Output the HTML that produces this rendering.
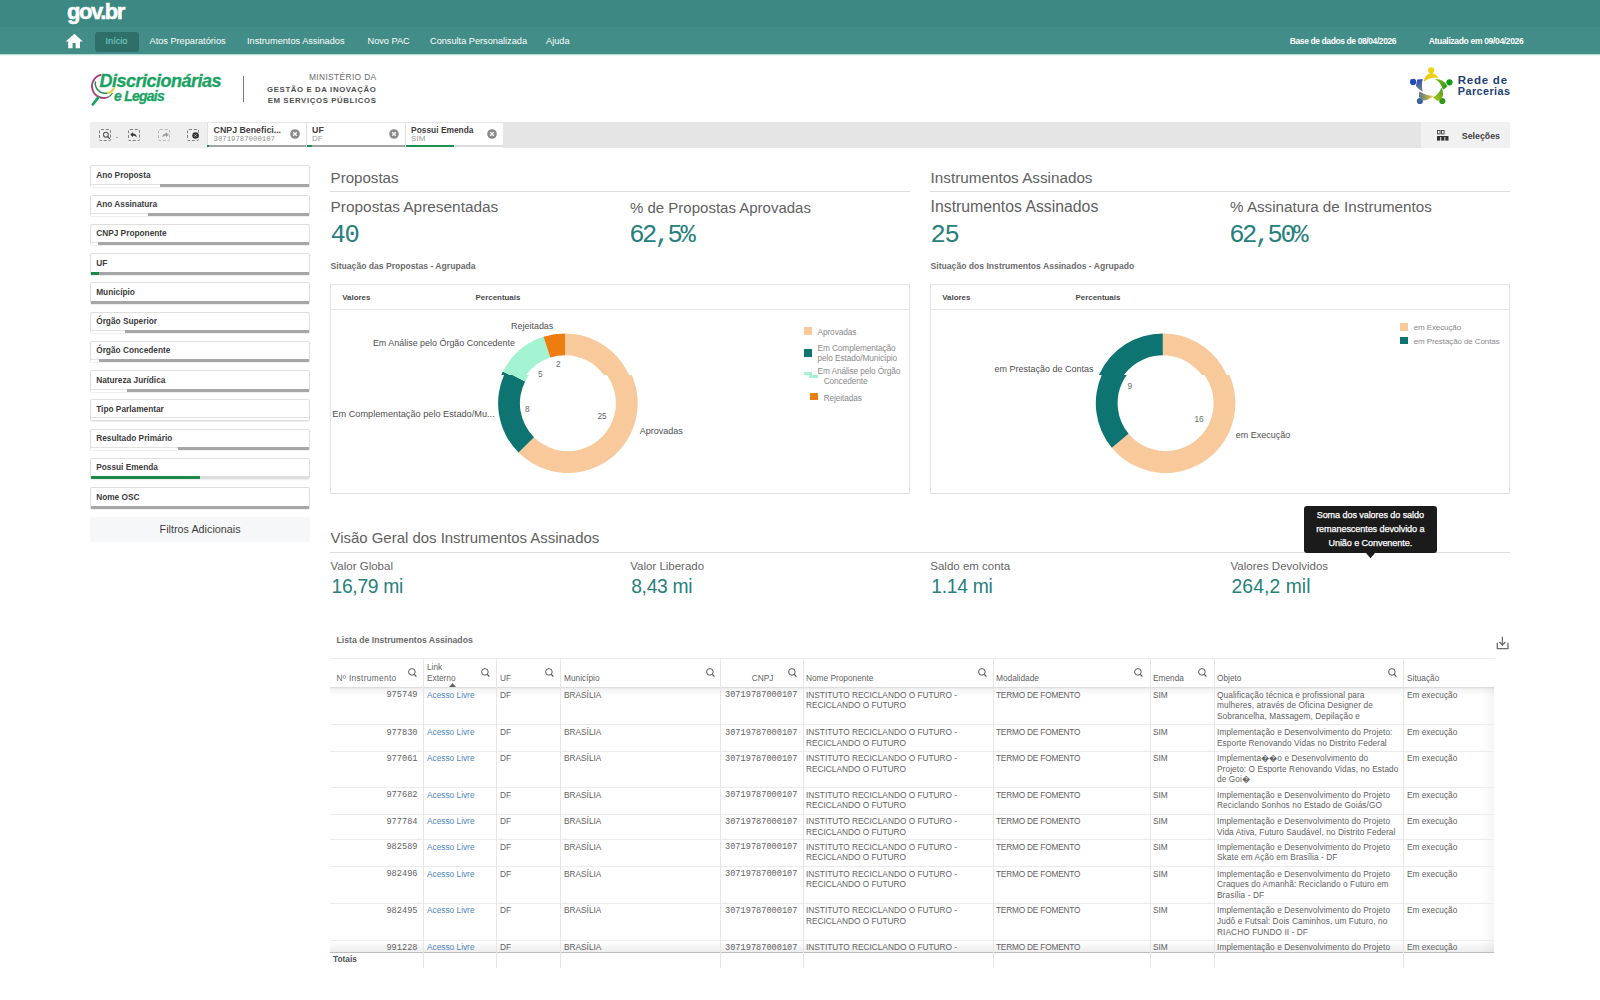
<!DOCTYPE html><html><head><meta charset="utf-8"><style>
html,body{margin:0;padding:0}
body{width:1600px;height:1000px;overflow:hidden;position:relative;background:#fff;font-family:'Liberation Sans',sans-serif}
.t{position:absolute;white-space:nowrap}
.r{position:absolute;box-sizing:border-box}
svg{position:absolute;overflow:visible}
</style></head><body>
<div class="r" style="left:0.00px;top:0.00px;width:1600.00px;height:27.00px;background:#3c8882;"></div>
<div class="r" style="left:0.00px;top:27.00px;width:1600.00px;height:27.00px;background:#428d87;"></div>
<div class="r" style="left:0.00px;top:54.00px;width:1600.00px;height:1.00px;background:#b4e0da;"></div>
<div class="r" style="left:0.00px;top:55.00px;width:1600.00px;height:1.00px;background:#eaf6f4;"></div>
<div class="t" style="left:67.00px;top:0.90px;font:bold 22px/22px 'Liberation Sans',sans-serif;color:#fff;letter-spacing:-1.45px;-webkit-text-stroke:0.5px #fff;">gov.br</div>
<svg style="left:65px;top:33px" width="19" height="16" viewBox="0 0 19 16"><path d="M9.5 0.8 L0.6 8.6 L3.2 8.6 L3.2 15.2 L7.6 15.2 L7.6 10 L10.6 10 L10.6 15.2 L15 15.2 L15 8.6 L17.8 8.6 Z" fill="#fff"/></svg>
<div class="r" style="left:95.00px;top:32.00px;width:44.00px;height:19.50px;background:#2f6f69;border-radius:3px;"></div>
<div class="t" style="left:105.50px;top:37.18px;font:normal 9.2px/9.2px 'Liberation Sans',sans-serif;color:#7ad8ce;">Início</div>
<div class="t" style="left:149.50px;top:37.18px;font:normal 9.2px/9.2px 'Liberation Sans',sans-serif;color:#fff;">Atos Preparatórios</div>
<div class="t" style="left:247.00px;top:37.18px;font:normal 9.2px/9.2px 'Liberation Sans',sans-serif;color:#fff;">Instrumentos Assinados</div>
<div class="t" style="left:367.50px;top:37.18px;font:normal 9.2px/9.2px 'Liberation Sans',sans-serif;color:#fff;">Novo PAC</div>
<div class="t" style="left:430.00px;top:37.18px;font:normal 9.2px/9.2px 'Liberation Sans',sans-serif;color:#fff;">Consulta Personalizada</div>
<div class="t" style="left:546.00px;top:37.18px;font:normal 9.2px/9.2px 'Liberation Sans',sans-serif;color:#fff;">Ajuda</div>
<div class="t" style="left:1289.80px;top:37.38px;font:bold 8.5px/8.5px 'Liberation Sans',sans-serif;color:#fff;letter-spacing:-0.4px;">Base de dados de 08/04/2026</div>
<div class="t" style="left:1428.80px;top:37.38px;font:bold 8.5px/8.5px 'Liberation Sans',sans-serif;color:#fff;letter-spacing:-0.33px;">Atualizado em 09/04/2026</div>
<svg style="left:86px;top:70px" width="32" height="38" viewBox="0 0 32 38">
<path d="M15.5 4.6 A11.8 11.8 0 1 0 22.5 27" fill="none" stroke="#a2457f" stroke-width="1.9"/>
<path d="M22.5 27 A11.8 11.8 0 0 0 26.5 23" fill="none" stroke="#2e8a5c" stroke-width="1.3"/>
<path d="M9.48 11.39 A10 10 0 0 0 21.04 23.15" fill="none" stroke="#2e8a5c" stroke-width="1.5"/>
<path d="M21.04 23.15 A10 10 0 0 0 28.13 17.99" fill="none" stroke="#d9d33e" stroke-width="2"/>
<path d="M6.8 34.5 L12.2 27.6" fill="none" stroke="#1aa362" stroke-width="2.8" stroke-linecap="round"/>
</svg>
<div class="t" style="left:99.50px;top:72.20px;font:bold 18px/18px 'Liberation Sans',sans-serif;color:#1aa362;letter-spacing:-0.5px;font-style:italic;-webkit-text-stroke:0.3px #1aa362;">Discricionárias</div>
<div class="t" style="left:114.00px;top:89.10px;font:bold 14px/14px 'Liberation Sans',sans-serif;color:#1aa362;letter-spacing:-0.75px;font-style:italic;-webkit-text-stroke:0.3px #1aa362;">e Legais</div>
<div class="r" style="left:243.00px;top:76.00px;width:1.20px;height:26.00px;background:#7a7a7a;"></div>
<div class="t" style="left:-223.50px;width:600px;text-align:right;top:73.36px;font:normal 8.4px/8.4px 'Liberation Sans',sans-serif;color:#6a6a6a;letter-spacing:0.36px;padding-right:0;">MINISTÉRIO DA</div>
<div class="t" style="left:-223.50px;width:600px;text-align:right;top:85.57px;font:bold 7.8px/7.8px 'Liberation Sans',sans-serif;color:#4f4f4f;letter-spacing:0.62px;">GESTÃO E DA INOVAÇÃO</div>
<div class="t" style="left:-223.50px;width:600px;text-align:right;top:97.07px;font:bold 7.8px/7.8px 'Liberation Sans',sans-serif;color:#4f4f4f;letter-spacing:0.62px;">EM SERVIÇOS PÚBLICOS</div>
<svg style="left:1406px;top:64px" width="50" height="42" viewBox="0 0 50 42">
<defs>
<linearGradient id="rg1" x1="0" y1="0" x2="1" y2="0"><stop offset="0" stop-color="#e9c52a"/><stop offset="1" stop-color="#f3d60c"/></linearGradient>
<linearGradient id="rg2" x1="0" y1="0" x2="1" y2="1"><stop offset="0" stop-color="#8ab81c"/><stop offset="1" stop-color="#1f961a"/></linearGradient>
<linearGradient id="rg3" x1="0" y1="1" x2="1" y2="0"><stop offset="0" stop-color="#b9c91a"/><stop offset="1" stop-color="#3f9e19"/></linearGradient>
<linearGradient id="rg4" x1="1" y1="0" x2="0" y2="0"><stop offset="0" stop-color="#efc91c"/><stop offset="1" stop-color="#5a7493"/></linearGradient>
<linearGradient id="rg5" x1="0" y1="0" x2="0.3" y2="1"><stop offset="0" stop-color="#2346b4"/><stop offset="1" stop-color="#6a8090"/></linearGradient>
</defs>
<circle cx="25.2" cy="6.3" r="3.1" fill="#f2d10e"/>
<circle cx="7.1" cy="17.9" r="3.1" fill="#1f48bf"/>
<circle cx="43.5" cy="18.3" r="3.1" fill="#139a16"/>
<circle cx="13.9" cy="37" r="3.1" fill="#3e64a0"/>
<circle cx="36.3" cy="37" r="3.1" fill="#2f9a1a"/>
<path d="M17.5 18 Q19 10.2 25 9 Q30 9.2 32.5 14.2 Q25 12.5 17.5 18 Z" fill="url(#rg1)"/>
<path d="M29 15 Q37 14.5 41.5 22 Q40 24 37 25.8 Q35 18.5 29 15 Z" fill="url(#rg2)"/>
<path d="M35.5 23.5 Q38 30 36.5 33 Q34 36.5 32 37 Q29 35.5 27 33.5 Q33 30 35.5 23.5 Z" fill="url(#rg3)"/>
<path d="M27.5 32 Q22 36 18 36.5 Q14.5 35 13 33 Q12.8 30 13.5 27.5 Q20 31.5 27.5 32 Z" fill="url(#rg4)"/>
<path d="M16.8 27.7 Q12 25 10 22 Q10.5 17 11.5 15.5 Q14 15 16.8 15 Q15 21 16.8 27.7 Z" fill="url(#rg5)"/>
</svg>
<div class="t" style="left:1457.80px;top:74.92px;font:bold 11.5px/11.5px 'Liberation Sans',sans-serif;color:#1d4079;letter-spacing:0.75px;">Rede de</div>
<div class="t" style="left:1457.80px;top:85.72px;font:bold 10.8px/10.8px 'Liberation Sans',sans-serif;color:#1d4079;letter-spacing:0.45px;">Parcerias</div>
<div class="r" style="left:90.00px;top:122.30px;width:1331.00px;height:25.40px;background:#e5e5e5;"></div>
<div class="r" style="left:90.00px;top:122.30px;width:117.00px;height:25.40px;background:#efefef;"></div>
<div class="r" style="left:1421.00px;top:122.30px;width:88.50px;height:25.40px;background:#f1f1f1;"></div>
<div class="r" style="left:99px;top:128.8px;width:12px;height:12px;border:1px dashed #808080;border-radius:2px;opacity:1"></div>
<div class="r" style="left:128px;top:128.8px;width:12px;height:12px;border:1px dashed #808080;border-radius:2px;opacity:1"></div>
<div class="r" style="left:157.5px;top:128.8px;width:12px;height:12px;border:1px dashed #808080;border-radius:2px;opacity:0.5"></div>
<div class="r" style="left:187px;top:128.8px;width:12px;height:12px;border:1px dashed #808080;border-radius:2px;opacity:1"></div>
<svg style="left:102px;top:131px" width="9" height="9" viewBox="0 0 9 9"><circle cx="3.9" cy="3.7" r="2.4" fill="none" stroke="#555" stroke-width="1.1"/><path d="M5.6 5.5 L7.8 7.9" stroke="#555" stroke-width="1.3"/></svg>
<div class="r" style="left:116px;top:136.6px;width:1.5px;height:1px;background:#aaa"></div>
<svg style="left:128.5px;top:131px" width="9" height="8" viewBox="0 0 9 8"><path d="M1.2 3.6 L4 1.2 L4 2.6 C6.2 2.6 7.6 4 7.8 6.6 C6.8 5.2 5.8 4.8 4 4.8 L4 6.2 Z" fill="#3a3a3a"/></svg>
<svg style="left:160.5px;top:131px;opacity:.45" width="9" height="8" viewBox="0 0 9 8"><path d="M7.8 3.6 L5 1.2 L5 2.6 C2.8 2.6 1.4 4 1.2 6.6 C2.2 5.2 3.2 4.8 5 4.8 L5 6.2 Z" fill="#3a3a3a"/></svg>
<svg style="left:192px;top:132px" width="7" height="7" viewBox="0 0 7 7"><circle cx="3.5" cy="3.5" r="3.2" fill="#2e2e2e"/><path d="M2.3 2.3 L4.7 4.7 M4.7 2.3 L2.3 4.7" stroke="#ddd" stroke-width="0.7"/></svg>
<div class="r" style="left:207.00px;top:123.00px;width:99.00px;height:24.50px;background:#fff;"></div>
<div class="t" style="left:213.60px;top:126.12px;font:bold 8.8px/8.8px 'Liberation Sans',sans-serif;color:#404040;">CNPJ Benefici...</div>
<div class="t" style="left:213.60px;top:135.53px;font:normal 7.3px/7.3px 'Liberation Mono',monospace;color:#8f8f8f;">30719787000107</div>
<svg style="left:290.0px;top:128.8px" width="10" height="10" viewBox="0 0 10 10"><circle cx="5" cy="5" r="4.8" fill="#8a8a8a"/><path d="M3.2 3.2 L6.8 6.8 M6.8 3.2 L3.2 6.8" stroke="#fff" stroke-width="1.3"/></svg>
<div class="r" style="left:306.50px;top:123.00px;width:98.50px;height:24.50px;background:#fff;"></div>
<div class="t" style="left:312.10px;top:126.12px;font:bold 8.8px/8.8px 'Liberation Sans',sans-serif;color:#404040;">UF</div>
<div class="t" style="left:312.10px;top:134.60px;font:normal 8px/8px 'Liberation Sans',sans-serif;color:#9a9a9a;">DF</div>
<svg style="left:389.0px;top:128.8px" width="10" height="10" viewBox="0 0 10 10"><circle cx="5" cy="5" r="4.8" fill="#8a8a8a"/><path d="M3.2 3.2 L6.8 6.8 M6.8 3.2 L3.2 6.8" stroke="#fff" stroke-width="1.3"/></svg>
<div class="r" style="left:405.50px;top:123.00px;width:97.00px;height:24.50px;background:#fff;"></div>
<div class="t" style="left:411.10px;top:126.46px;font:bold 8.4px/8.4px 'Liberation Sans',sans-serif;color:#404040;">Possui Emenda</div>
<div class="t" style="left:411.10px;top:134.60px;font:normal 8px/8px 'Liberation Sans',sans-serif;color:#9a9a9a;">SIM</div>
<svg style="left:486.5px;top:128.8px" width="10" height="10" viewBox="0 0 10 10"><circle cx="5" cy="5" r="4.8" fill="#8a8a8a"/><path d="M3.2 3.2 L6.8 6.8 M6.8 3.2 L3.2 6.8" stroke="#fff" stroke-width="1.3"/></svg>
<div class="r" style="left:207.00px;top:123.00px;width:1.00px;height:24.50px;background:#e0e0e0;"></div>
<div class="r" style="left:306.00px;top:123.00px;width:1.00px;height:24.50px;background:#e0e0e0;"></div>
<div class="r" style="left:405.00px;top:123.00px;width:1.00px;height:24.50px;background:#e0e0e0;"></div>
<div class="r" style="left:207.00px;top:144.60px;width:99.00px;height:2.90px;background:#a3a3a3;"></div>
<div class="r" style="left:207.00px;top:144.60px;width:1.50px;height:2.90px;background:#1e8f4e;"></div>
<div class="r" style="left:306.50px;top:144.60px;width:98.50px;height:2.90px;background:#a3a3a3;"></div>
<div class="r" style="left:306.50px;top:144.60px;width:5.00px;height:2.90px;background:#1e8f4e;"></div>
<div class="r" style="left:405.50px;top:144.60px;width:97.00px;height:2.90px;background:#dcdcdc;"></div>
<div class="r" style="left:405.50px;top:144.60px;width:48.50px;height:2.90px;background:#1e8f4e;"></div>
<svg style="left:1437px;top:130px" width="12" height="11" viewBox="0 0 12 11"><rect x="0.5" y="0.5" width="2.6" height="3.4" fill="none" stroke="#444" stroke-width="0.9"/><rect x="4.5" y="0.5" width="2.6" height="3.4" fill="none" stroke="#444" stroke-width="0.9"/><rect x="0" y="6" width="11.5" height="1" fill="#333"/><rect x="0" y="7" width="3.2" height="3.6" fill="#333"/><rect x="4.2" y="7" width="3.2" height="3.6" fill="#333"/><rect x="8.3" y="7" width="3.2" height="3.6" fill="#333"/></svg>
<div class="t" style="left:1461.80px;top:131.52px;font:bold 8.8px/8.8px 'Liberation Sans',sans-serif;color:#404040;">Seleções</div>
<div class="r" style="left:90.00px;top:165.40px;width:219.50px;height:21.60px;background:#fff;border:1px solid #dedede;border-radius:2px;box-shadow:0 1px 1px rgba(0,0,0,.07);"></div>
<div class="r" style="left:90.50px;top:183.80px;width:218.50px;height:3.00px;background:#a6a6a6;"></div>
<div class="r" style="left:90.50px;top:183.80px;width:69.50px;height:3.00px;background:#fff;border-top:1px solid #e2e2e2;"></div>
<div class="t" style="left:96.20px;top:170.94px;font:bold 8.3px/8.3px 'Liberation Sans',sans-serif;color:#3c3c3c;">Ano Proposta</div>
<div class="r" style="left:90.00px;top:194.65px;width:219.50px;height:21.60px;background:#fff;border:1px solid #dedede;border-radius:2px;box-shadow:0 1px 1px rgba(0,0,0,.07);"></div>
<div class="r" style="left:90.50px;top:213.05px;width:218.50px;height:3.00px;background:#a6a6a6;"></div>
<div class="r" style="left:90.50px;top:213.05px;width:57.50px;height:3.00px;background:#fff;border-top:1px solid #e2e2e2;"></div>
<div class="t" style="left:96.20px;top:200.19px;font:bold 8.3px/8.3px 'Liberation Sans',sans-serif;color:#3c3c3c;">Ano Assinatura</div>
<div class="r" style="left:90.00px;top:223.90px;width:219.50px;height:21.60px;background:#fff;border:1px solid #dedede;border-radius:2px;box-shadow:0 1px 1px rgba(0,0,0,.07);"></div>
<div class="r" style="left:90.50px;top:242.30px;width:218.50px;height:3.00px;background:#a6a6a6;"></div>
<div class="r" style="left:90.50px;top:242.30px;width:7.10px;height:3.00px;background:#fff;border-top:1px solid #e2e2e2;"></div>
<div class="t" style="left:96.20px;top:229.44px;font:bold 8.3px/8.3px 'Liberation Sans',sans-serif;color:#3c3c3c;">CNPJ Proponente</div>
<div class="r" style="left:90.00px;top:253.15px;width:219.50px;height:21.60px;background:#fff;border:1px solid #dedede;border-radius:2px;box-shadow:0 1px 1px rgba(0,0,0,.07);"></div>
<div class="r" style="left:90.50px;top:271.55px;width:218.50px;height:3.00px;background:#a6a6a6;"></div>
<div class="r" style="left:90.50px;top:271.55px;width:8.50px;height:3.00px;background:#1a8b47;"></div>
<div class="t" style="left:96.20px;top:258.69px;font:bold 8.3px/8.3px 'Liberation Sans',sans-serif;color:#3c3c3c;">UF</div>
<div class="r" style="left:90.00px;top:282.40px;width:219.50px;height:21.60px;background:#fff;border:1px solid #dedede;border-radius:2px;box-shadow:0 1px 1px rgba(0,0,0,.07);"></div>
<div class="r" style="left:90.50px;top:300.80px;width:218.50px;height:3.00px;background:#a6a6a6;"></div>
<div class="t" style="left:96.20px;top:287.94px;font:bold 8.3px/8.3px 'Liberation Sans',sans-serif;color:#3c3c3c;">Município</div>
<div class="r" style="left:90.00px;top:311.65px;width:219.50px;height:21.60px;background:#fff;border:1px solid #dedede;border-radius:2px;box-shadow:0 1px 1px rgba(0,0,0,.07);"></div>
<div class="r" style="left:90.50px;top:330.05px;width:218.50px;height:3.00px;background:#a6a6a6;"></div>
<div class="r" style="left:90.50px;top:330.05px;width:34.50px;height:3.00px;background:#fff;border-top:1px solid #e2e2e2;"></div>
<div class="t" style="left:96.20px;top:317.19px;font:bold 8.3px/8.3px 'Liberation Sans',sans-serif;color:#3c3c3c;">Órgão Superior</div>
<div class="r" style="left:90.00px;top:340.90px;width:219.50px;height:21.60px;background:#fff;border:1px solid #dedede;border-radius:2px;box-shadow:0 1px 1px rgba(0,0,0,.07);"></div>
<div class="r" style="left:90.50px;top:359.30px;width:218.50px;height:3.00px;background:#a6a6a6;"></div>
<div class="r" style="left:90.50px;top:359.30px;width:8.20px;height:3.00px;background:#fff;border-top:1px solid #e2e2e2;"></div>
<div class="t" style="left:96.20px;top:346.44px;font:bold 8.3px/8.3px 'Liberation Sans',sans-serif;color:#3c3c3c;">Órgão Concedente</div>
<div class="r" style="left:90.00px;top:370.15px;width:219.50px;height:21.60px;background:#fff;border:1px solid #dedede;border-radius:2px;box-shadow:0 1px 1px rgba(0,0,0,.07);"></div>
<div class="r" style="left:90.50px;top:388.55px;width:218.50px;height:3.00px;background:#a6a6a6;"></div>
<div class="r" style="left:90.50px;top:388.55px;width:36.50px;height:3.00px;background:#fff;border-top:1px solid #e2e2e2;"></div>
<div class="t" style="left:96.20px;top:375.69px;font:bold 8.3px/8.3px 'Liberation Sans',sans-serif;color:#3c3c3c;">Natureza Jurídica</div>
<div class="r" style="left:90.00px;top:399.40px;width:219.50px;height:21.60px;background:#fff;border:1px solid #dedede;border-radius:2px;box-shadow:0 1px 1px rgba(0,0,0,.07);"></div>
<div class="r" style="left:90.50px;top:417.40px;width:218.50px;height:1.00px;background:#e2e2e2;"></div>
<div class="t" style="left:96.20px;top:404.94px;font:bold 8.3px/8.3px 'Liberation Sans',sans-serif;color:#3c3c3c;">Tipo Parlamentar</div>
<div class="r" style="left:90.00px;top:428.65px;width:219.50px;height:21.60px;background:#fff;border:1px solid #dedede;border-radius:2px;box-shadow:0 1px 1px rgba(0,0,0,.07);"></div>
<div class="r" style="left:90.50px;top:447.05px;width:218.50px;height:3.00px;background:#a6a6a6;"></div>
<div class="r" style="left:90.50px;top:447.05px;width:87.50px;height:3.00px;background:#fff;border-top:1px solid #e2e2e2;"></div>
<div class="t" style="left:96.20px;top:434.19px;font:bold 8.3px/8.3px 'Liberation Sans',sans-serif;color:#3c3c3c;">Resultado Primário</div>
<div class="r" style="left:90.00px;top:457.90px;width:219.50px;height:21.60px;background:#fff;border:1px solid #dedede;border-radius:2px;box-shadow:0 1px 1px rgba(0,0,0,.07);"></div>
<div class="r" style="left:90.50px;top:476.30px;width:218.50px;height:3.00px;background:#dedede;"></div>
<div class="r" style="left:90.50px;top:476.30px;width:109.50px;height:3.00px;background:#1a8b47;"></div>
<div class="t" style="left:96.20px;top:463.44px;font:bold 8.3px/8.3px 'Liberation Sans',sans-serif;color:#3c3c3c;">Possui Emenda</div>
<div class="r" style="left:90.00px;top:487.15px;width:219.50px;height:21.60px;background:#fff;border:1px solid #dedede;border-radius:2px;box-shadow:0 1px 1px rgba(0,0,0,.07);"></div>
<div class="r" style="left:90.50px;top:505.55px;width:218.50px;height:3.00px;background:#a6a6a6;"></div>
<div class="t" style="left:96.20px;top:492.69px;font:bold 8.3px/8.3px 'Liberation Sans',sans-serif;color:#3c3c3c;">Nome OSC</div>
<div class="r" style="left:90.00px;top:517.00px;width:219.50px;height:25.30px;background:#f6f7f8;border-radius:2px;"></div>
<div class="t" style="left:-99.90px;width:600px;text-align:center;top:524.42px;font:normal 10.8px/10.8px 'Liberation Sans',sans-serif;color:#3f3f3f;">Filtros Adicionais</div>
<div class="t" style="left:330.60px;top:169.91px;font:normal 15.1px/15.1px 'Liberation Sans',sans-serif;color:#616161;">Propostas</div>
<div class="r" style="left:330.00px;top:191.00px;width:580.00px;height:1.00px;background:#dcdcdc;"></div>
<div class="t" style="left:330.60px;top:199.21px;font:normal 15.4px/15.4px 'Liberation Sans',sans-serif;color:#616161;">Propostas Apresentadas</div>
<div class="t" style="left:630.00px;top:199.55px;font:normal 15.0px/15.0px 'Liberation Sans',sans-serif;color:#616161;">% de Propostas Aprovadas</div>
<div class="t" style="left:330.60px;top:222.88px;font:normal 25.5px/25.5px 'Liberation Mono',monospace;color:#27807b;letter-spacing:-1.3px;">40</div>
<div class="t" style="left:629.20px;top:222.88px;font:normal 25.5px/25.5px 'Liberation Mono',monospace;color:#27807b;letter-spacing:-2.5px;">62,5%</div>
<div class="t" style="left:330.60px;top:262.09px;font:bold 8.6px/8.6px 'Liberation Sans',sans-serif;color:#6b6b6b;">Situação das Propostas - Agrupada</div>
<div class="r" style="left:330.00px;top:284.00px;width:580.00px;height:210.00px;border:1px solid #e3e3e3;background:#fff;"></div>
<div class="r" style="left:331.00px;top:309.00px;width:578.00px;height:1.00px;background:#e6e6e6;"></div>
<div class="t" style="left:342.30px;top:293.59px;font:bold 7.9px/7.9px 'Liberation Sans',sans-serif;color:#4a4a4a;">Valores</div>
<div class="t" style="left:475.60px;top:293.59px;font:bold 7.9px/7.9px 'Liberation Sans',sans-serif;color:#4a4a4a;">Percentuais</div>
<div class="t" style="left:930.60px;top:169.79px;font:normal 15.25px/15.25px 'Liberation Sans',sans-serif;color:#616161;">Instrumentos Assinados</div>
<div class="r" style="left:930.00px;top:191.00px;width:580.00px;height:1.00px;background:#dcdcdc;"></div>
<div class="t" style="left:930.60px;top:198.87px;font:normal 15.8px/15.8px 'Liberation Sans',sans-serif;color:#616161;">Instrumentos Assinados</div>
<div class="t" style="left:1230.00px;top:199.38px;font:normal 15.2px/15.2px 'Liberation Sans',sans-serif;color:#616161;">% Assinatura de Instrumentos</div>
<div class="t" style="left:930.60px;top:222.88px;font:normal 25.5px/25.5px 'Liberation Mono',monospace;color:#27807b;letter-spacing:-1.3px;">25</div>
<div class="t" style="left:1229.20px;top:222.88px;font:normal 25.5px/25.5px 'Liberation Mono',monospace;color:#27807b;letter-spacing:-2.5px;">62,50%</div>
<div class="t" style="left:930.60px;top:262.09px;font:bold 8.6px/8.6px 'Liberation Sans',sans-serif;color:#6b6b6b;">Situação dos Instrumentos Assinados - Agrupado</div>
<div class="r" style="left:930.00px;top:284.00px;width:580.00px;height:210.00px;border:1px solid #e3e3e3;background:#fff;"></div>
<div class="r" style="left:931.00px;top:309.00px;width:578.00px;height:1.00px;background:#e6e6e6;"></div>
<div class="t" style="left:942.30px;top:293.59px;font:bold 7.9px/7.9px 'Liberation Sans',sans-serif;color:#4a4a4a;">Valores</div>
<div class="t" style="left:1075.60px;top:293.59px;font:bold 7.9px/7.9px 'Liberation Sans',sans-serif;color:#4a4a4a;">Percentuais</div>
<svg style="left:0;top:0" width="1600" height="1000" viewBox="0 0 1600 1000"><defs><clipPath id="ct1"><rect x="0" y="0" width="1600" height="375"/></clipPath><clipPath id="cb1"><rect x="0" y="375" width="1600" height="625"/></clipPath></defs><g clip-path="url(#ct1)"><g transform="translate(-2.8,0)"><path d="M567.90 333.40 A69.8 69.8 0 1 1 518.54 452.56 L533.96 437.14 A48.0 48.0 0 1 0 567.90 355.20 Z" fill="#f7c99b"/><path d="M518.54 452.56 A69.8 69.8 0 0 1 505.71 371.51 L525.13 381.41 A48.0 48.0 0 0 0 533.96 437.14 Z" fill="#0d7471"/><path d="M505.71 371.51 A69.8 69.8 0 0 1 546.33 336.82 L553.07 357.55 A48.0 48.0 0 0 0 525.13 381.41 Z" fill="#a3f3d3"/><path d="M546.33 336.82 A69.8 69.8 0 0 1 567.90 333.40 L567.90 355.20 A48.0 48.0 0 0 0 553.07 357.55 Z" fill="#ee7d11"/></g></g><g clip-path="url(#cb1)"><path d="M567.90 333.40 A69.8 69.8 0 1 1 518.54 452.56 L533.96 437.14 A48.0 48.0 0 1 0 567.90 355.20 Z" fill="#f7c99b"/><path d="M518.54 452.56 A69.8 69.8 0 0 1 505.71 371.51 L525.13 381.41 A48.0 48.0 0 0 0 533.96 437.14 Z" fill="#0d7471"/><path d="M505.71 371.51 A69.8 69.8 0 0 1 546.33 336.82 L553.07 357.55 A48.0 48.0 0 0 0 525.13 381.41 Z" fill="#a3f3d3"/><path d="M546.33 336.82 A69.8 69.8 0 0 1 567.90 333.40 L567.90 355.20 A48.0 48.0 0 0 0 553.07 357.55 Z" fill="#ee7d11"/></g></svg>
<div class="t" style="left:556.00px;top:359.94px;font:normal 8.3px/8.3px 'Liberation Sans',sans-serif;color:#6a6a6a;">2</div>
<div class="t" style="left:538.00px;top:369.94px;font:normal 8.3px/8.3px 'Liberation Sans',sans-serif;color:#6a6a6a;">5</div>
<div class="t" style="left:525.00px;top:404.94px;font:normal 8.3px/8.3px 'Liberation Sans',sans-serif;color:#6a6a6a;">8</div>
<div class="t" style="left:597.50px;top:412.44px;font:normal 8.3px/8.3px 'Liberation Sans',sans-serif;color:#6a6a6a;">25</div>
<div class="t" style="left:-46.70px;width:600px;text-align:right;top:321.59px;font:normal 8.95px/8.95px 'Liberation Sans',sans-serif;color:#4f4f4f;">Rejeitadas</div>
<div class="t" style="left:-85.00px;width:600px;text-align:right;top:339.39px;font:normal 8.95px/8.95px 'Liberation Sans',sans-serif;color:#4f4f4f;">Em Análise pelo Órgão Concedente</div>
<div class="t" style="left:332.30px;top:409.78px;font:normal 9.2px/9.2px 'Liberation Sans',sans-serif;color:#4f4f4f;">Em Complementação pelo Estado/Mu...</div>
<div class="t" style="left:639.80px;top:427.35px;font:normal 9px/9px 'Liberation Sans',sans-serif;color:#4f4f4f;">Aprovadas</div>
<div class="r" style="left:804.00px;top:327.30px;width:8.00px;height:7.80px;background:#f7c99b;"></div>
<div class="t" style="left:817.50px;top:327.55px;font:normal 8.3px/8.3px 'Liberation Sans',sans-serif;color:#8a8a8a;letter-spacing:-0.1px;">Aprovadas</div>
<div class="r" style="left:804.00px;top:349.20px;width:8.00px;height:7.60px;background:#0d7471;"></div>
<div class="t" style="left:817.50px;top:344.05px;font:normal 8.3px/8.3px 'Liberation Sans',sans-serif;color:#8a8a8a;letter-spacing:-0.1px;">Em Complementação</div>
<div class="t" style="left:817.50px;top:354.05px;font:normal 8.3px/8.3px 'Liberation Sans',sans-serif;color:#8a8a8a;letter-spacing:-0.1px;">pelo Estado/Município</div>
<div class="r" style="left:804.00px;top:372.00px;width:8.00px;height:3.00px;background:#a3f3d3;"></div>
<div class="r" style="left:809.00px;top:375.00px;width:9.00px;height:3.00px;background:#a3f3d3;"></div>
<div class="t" style="left:817.50px;top:366.55px;font:normal 8.3px/8.3px 'Liberation Sans',sans-serif;color:#8a8a8a;letter-spacing:-0.1px;">Em Análise pelo Órgão</div>
<div class="t" style="left:823.70px;top:376.55px;font:normal 8.3px/8.3px 'Liberation Sans',sans-serif;color:#8a8a8a;letter-spacing:-0.1px;">Concedente</div>
<div class="r" style="left:810.00px;top:392.90px;width:8.00px;height:7.60px;background:#ee7d11;"></div>
<div class="t" style="left:823.70px;top:393.55px;font:normal 8.3px/8.3px 'Liberation Sans',sans-serif;color:#8a8a8a;letter-spacing:-0.1px;">Rejeitadas</div>
<svg style="left:0;top:0" width="1600" height="1000" viewBox="0 0 1600 1000"><defs><clipPath id="ct2"><rect x="0" y="0" width="1600" height="375"/></clipPath><clipPath id="cb2"><rect x="0" y="375" width="1600" height="625"/></clipPath></defs><g clip-path="url(#ct2)"><g transform="translate(-2.8,0)"><path d="M1165.60 333.40 A69.8 69.8 0 1 1 1111.82 447.69 L1128.62 433.80 A48.0 48.0 0 1 0 1165.60 355.20 Z" fill="#f7c99b"/><path d="M1111.82 447.69 A69.8 69.8 0 0 1 1165.60 333.40 L1165.60 355.20 A48.0 48.0 0 0 0 1128.62 433.80 Z" fill="#0d7471"/></g></g><g clip-path="url(#cb2)"><path d="M1165.60 333.40 A69.8 69.8 0 1 1 1111.82 447.69 L1128.62 433.80 A48.0 48.0 0 1 0 1165.60 355.20 Z" fill="#f7c99b"/><path d="M1111.82 447.69 A69.8 69.8 0 0 1 1165.60 333.40 L1165.60 355.20 A48.0 48.0 0 0 0 1128.62 433.80 Z" fill="#0d7471"/></g></svg>
<div class="t" style="left:1127.50px;top:381.94px;font:normal 8.3px/8.3px 'Liberation Sans',sans-serif;color:#6a6a6a;">9</div>
<div class="t" style="left:1194.50px;top:414.94px;font:normal 8.3px/8.3px 'Liberation Sans',sans-serif;color:#6a6a6a;">16</div>
<div class="t" style="left:493.50px;width:600px;text-align:right;top:364.85px;font:normal 9px/9px 'Liberation Sans',sans-serif;color:#4f4f4f;">em Prestação de Contas</div>
<div class="t" style="left:1235.80px;top:430.85px;font:normal 9px/9px 'Liberation Sans',sans-serif;color:#4f4f4f;">em Execução</div>
<div class="r" style="left:1400.10px;top:323.10px;width:7.70px;height:7.70px;background:#f7c99b;"></div>
<div class="t" style="left:1413.70px;top:323.80px;font:normal 8.0px/8.0px 'Liberation Sans',sans-serif;color:#8a8a8a;letter-spacing:-0.1px;">em Execução</div>
<div class="r" style="left:1400.10px;top:336.70px;width:7.70px;height:7.30px;background:#0d7471;"></div>
<div class="t" style="left:1413.70px;top:337.50px;font:normal 8.0px/8.0px 'Liberation Sans',sans-serif;color:#8a8a8a;letter-spacing:-0.1px;">em Prestação de Contas</div>
<div class="t" style="left:330.50px;top:531.19px;font:normal 14.95px/14.95px 'Liberation Sans',sans-serif;color:#616161;">Visão Geral dos Instrumentos Assinados</div>
<div class="r" style="left:330.00px;top:552.00px;width:1180.00px;height:1.00px;background:#dcdcdc;"></div>
<div class="t" style="left:330.50px;top:560.83px;font:normal 11.5px/11.5px 'Liberation Sans',sans-serif;color:#666;">Valor Global</div>
<div class="t" style="left:331.50px;top:576.50px;font:normal 19.3px/19.3px 'Liberation Sans',sans-serif;color:#27807b;letter-spacing:-0.3px;">16,79 mi</div>
<div class="t" style="left:630.20px;top:560.83px;font:normal 11.5px/11.5px 'Liberation Sans',sans-serif;color:#666;">Valor Liberado</div>
<div class="t" style="left:631.20px;top:576.50px;font:normal 19.3px/19.3px 'Liberation Sans',sans-serif;color:#27807b;letter-spacing:-0.3px;">8,43 mi</div>
<div class="t" style="left:930.30px;top:560.83px;font:normal 11.5px/11.5px 'Liberation Sans',sans-serif;color:#666;">Saldo em conta</div>
<div class="t" style="left:931.30px;top:576.50px;font:normal 19.3px/19.3px 'Liberation Sans',sans-serif;color:#27807b;letter-spacing:-0.3px;">1.14 mi</div>
<div class="t" style="left:1230.50px;top:560.83px;font:normal 11.5px/11.5px 'Liberation Sans',sans-serif;color:#666;">Valores Devolvidos</div>
<div class="t" style="left:1231.50px;top:576.50px;font:normal 19.3px/19.3px 'Liberation Sans',sans-serif;color:#27807b;letter-spacing:0.1px;">264,2 mil</div>
<div class="r" style="left:1303.50px;top:506.20px;width:133.50px;height:46.80px;background:#1b1b1b;border-radius:3px;"></div>
<svg style="left:1365.5px;top:552.5px" width="9" height="6" viewBox="0 0 9 6"><path d="M0 0 L9 0 L4.5 5.2 Z" fill="#1b1b1b"/></svg>
<div class="t" style="left:1070.30px;width:600px;text-align:center;top:510.87px;font:normal 9.1px/9.1px 'Liberation Sans',sans-serif;color:#fff;letter-spacing:-0.1px;-webkit-text-stroke:0.25px #fff;">Soma dos valores do saldo</div>
<div class="t" style="left:1070.30px;width:600px;text-align:center;top:524.87px;font:normal 9.1px/9.1px 'Liberation Sans',sans-serif;color:#fff;letter-spacing:-0.1px;-webkit-text-stroke:0.25px #fff;">remanescentes devolvido a</div>
<div class="t" style="left:1070.30px;width:600px;text-align:center;top:538.87px;font:normal 9.1px/9.1px 'Liberation Sans',sans-serif;color:#fff;letter-spacing:-0.1px;-webkit-text-stroke:0.25px #fff;">União e Convenente.</div>
<div class="t" style="left:336.50px;top:635.61px;font:bold 8.7px/8.7px 'Liberation Sans',sans-serif;color:#6b6b6b;">Lista de Instrumentos Assinados</div>
<svg style="left:1495.5px;top:635.5px" width="14" height="14" viewBox="0 0 14 14"><path d="M6.4 0.8 L6.4 9" stroke="#6a6a6a" stroke-width="1.3" fill="none"/><path d="M3.4 6 L6.4 9 L9.4 6" stroke="#6a6a6a" stroke-width="1.3" fill="none"/><path d="M1.3 6.8 L1.3 12.6 L12 12.6 L12 6.8" stroke="#6a6a6a" stroke-width="1.3" fill="none" stroke-linejoin="round"/></svg>
<div class="r" style="left:330.00px;top:658.20px;width:1165.00px;height:1.00px;background:#ececec;"></div>
<div class="r" style="left:330.00px;top:687.20px;width:1164.00px;height:9.00px;background:linear-gradient(#e4e4e4,#f4f4f4 30%,rgba(255,255,255,0) 100%);"></div>
<div class="r" style="left:330.00px;top:687.20px;width:1164.00px;height:1.00px;background:#dedede;"></div>
<div class="r" style="left:1481.00px;top:687.20px;width:13.00px;height:264.60px;background:linear-gradient(90deg,rgba(255,255,255,0),rgba(0,0,0,0.045));"></div>
<div class="r" style="left:330.00px;top:724.40px;width:1164.00px;height:1.00px;background:#ececec;"></div>
<div class="r" style="left:330.00px;top:750.60px;width:1164.00px;height:1.00px;background:#ececec;"></div>
<div class="r" style="left:330.00px;top:787.20px;width:1164.00px;height:1.00px;background:#ececec;"></div>
<div class="r" style="left:330.00px;top:813.60px;width:1164.00px;height:1.00px;background:#ececec;"></div>
<div class="r" style="left:330.00px;top:839.20px;width:1164.00px;height:1.00px;background:#ececec;"></div>
<div class="r" style="left:330.00px;top:866.20px;width:1164.00px;height:1.00px;background:#ececec;"></div>
<div class="r" style="left:330.00px;top:902.80px;width:1164.00px;height:1.00px;background:#ececec;"></div>
<div class="r" style="left:330.00px;top:939.80px;width:1164.00px;height:1.00px;background:#ececec;"></div>
<div class="r" style="left:330.00px;top:940.80px;width:1164.00px;height:11.00px;background:linear-gradient(rgba(0,0,0,0),rgba(0,0,0,0.07));"></div>
<div class="r" style="left:330.00px;top:951.80px;width:1164.00px;height:1.20px;background:#bdbdbd;"></div>
<div class="r" style="left:423.40px;top:659.20px;width:1.00px;height:308.80px;background:#e6e6e6;"></div>
<div class="r" style="left:496.30px;top:659.20px;width:1.00px;height:308.80px;background:#e6e6e6;"></div>
<div class="r" style="left:560.20px;top:659.20px;width:1.00px;height:308.80px;background:#e6e6e6;"></div>
<div class="r" style="left:720.30px;top:659.20px;width:1.00px;height:308.80px;background:#e6e6e6;"></div>
<div class="r" style="left:802.50px;top:659.20px;width:1.00px;height:308.80px;background:#e6e6e6;"></div>
<div class="r" style="left:992.50px;top:659.20px;width:1.00px;height:308.80px;background:#e6e6e6;"></div>
<div class="r" style="left:1149.70px;top:659.20px;width:1.00px;height:308.80px;background:#e6e6e6;"></div>
<div class="r" style="left:1213.50px;top:659.20px;width:1.00px;height:308.80px;background:#e6e6e6;"></div>
<div class="r" style="left:1403.40px;top:659.20px;width:1.00px;height:308.80px;background:#e6e6e6;"></div>
<svg style="left:407.0px;top:667.3px" width="11" height="11" viewBox="0 0 11 11"><circle cx="4.9" cy="4.9" r="3.3" fill="none" stroke="#555" stroke-width="1"/><path d="M7.3 7.3 L9.4 9.6" stroke="#555" stroke-width="1.25"/></svg>
<svg style="left:480.0px;top:667.3px" width="11" height="11" viewBox="0 0 11 11"><circle cx="4.9" cy="4.9" r="3.3" fill="none" stroke="#555" stroke-width="1"/><path d="M7.3 7.3 L9.4 9.6" stroke="#555" stroke-width="1.25"/></svg>
<svg style="left:543.5px;top:667.3px" width="11" height="11" viewBox="0 0 11 11"><circle cx="4.9" cy="4.9" r="3.3" fill="none" stroke="#555" stroke-width="1"/><path d="M7.3 7.3 L9.4 9.6" stroke="#555" stroke-width="1.25"/></svg>
<svg style="left:704.5px;top:667.3px" width="11" height="11" viewBox="0 0 11 11"><circle cx="4.9" cy="4.9" r="3.3" fill="none" stroke="#555" stroke-width="1"/><path d="M7.3 7.3 L9.4 9.6" stroke="#555" stroke-width="1.25"/></svg>
<svg style="left:786.5px;top:667.3px" width="11" height="11" viewBox="0 0 11 11"><circle cx="4.9" cy="4.9" r="3.3" fill="none" stroke="#555" stroke-width="1"/><path d="M7.3 7.3 L9.4 9.6" stroke="#555" stroke-width="1.25"/></svg>
<svg style="left:976.5px;top:667.3px" width="11" height="11" viewBox="0 0 11 11"><circle cx="4.9" cy="4.9" r="3.3" fill="none" stroke="#555" stroke-width="1"/><path d="M7.3 7.3 L9.4 9.6" stroke="#555" stroke-width="1.25"/></svg>
<svg style="left:1133.0px;top:667.3px" width="11" height="11" viewBox="0 0 11 11"><circle cx="4.9" cy="4.9" r="3.3" fill="none" stroke="#555" stroke-width="1"/><path d="M7.3 7.3 L9.4 9.6" stroke="#555" stroke-width="1.25"/></svg>
<svg style="left:1197.0px;top:667.3px" width="11" height="11" viewBox="0 0 11 11"><circle cx="4.9" cy="4.9" r="3.3" fill="none" stroke="#555" stroke-width="1"/><path d="M7.3 7.3 L9.4 9.6" stroke="#555" stroke-width="1.25"/></svg>
<svg style="left:1387.0px;top:667.3px" width="11" height="11" viewBox="0 0 11 11"><circle cx="4.9" cy="4.9" r="3.3" fill="none" stroke="#555" stroke-width="1"/><path d="M7.3 7.3 L9.4 9.6" stroke="#555" stroke-width="1.25"/></svg>
<div class="t" style="left:336.50px;top:673.55px;font:normal 8.3px/8.3px 'Liberation Sans',sans-serif;color:#626262;letter-spacing:0.35px;">Nº Instrumento</div>
<div class="t" style="left:427.00px;top:662.95px;font:normal 8.3px/8.3px 'Liberation Sans',sans-serif;color:#626262;">Link</div>
<div class="t" style="left:427.00px;top:673.55px;font:normal 8.3px/8.3px 'Liberation Sans',sans-serif;color:#626262;">Externo</div>
<svg style="left:449px;top:683px" width="7" height="4" viewBox="0 0 7 4"><path d="M0 4 L3.5 0 L7 4 Z" fill="#666"/></svg>
<div class="t" style="left:500.00px;top:673.55px;font:normal 8.3px/8.3px 'Liberation Sans',sans-serif;color:#626262;">UF</div>
<div class="t" style="left:564.00px;top:673.55px;font:normal 8.3px/8.3px 'Liberation Sans',sans-serif;color:#626262;">Município</div>
<div class="t" style="left:173.50px;width:600px;text-align:right;top:673.55px;font:normal 8.3px/8.3px 'Liberation Sans',sans-serif;color:#626262;">CNPJ</div>
<div class="t" style="left:806.00px;top:673.55px;font:normal 8.3px/8.3px 'Liberation Sans',sans-serif;color:#626262;">Nome Proponente</div>
<div class="t" style="left:996.00px;top:673.55px;font:normal 8.3px/8.3px 'Liberation Sans',sans-serif;color:#626262;">Modalidade</div>
<div class="t" style="left:1153.00px;top:673.55px;font:normal 8.3px/8.3px 'Liberation Sans',sans-serif;color:#626262;">Emenda</div>
<div class="t" style="left:1217.00px;top:673.55px;font:normal 8.3px/8.3px 'Liberation Sans',sans-serif;color:#626262;">Objeto</div>
<div class="t" style="left:1407.00px;top:673.55px;font:normal 8.3px/8.3px 'Liberation Sans',sans-serif;color:#626262;">Situação</div>
<div class="t" style="left:-182.50px;width:600px;text-align:right;top:691.31px;font:normal 8.65px/8.65px 'Liberation Mono',monospace;color:#626262;">975749</div>
<div class="t" style="left:427.00px;top:690.75px;font:normal 8.3px/8.3px 'Liberation Sans',sans-serif;color:#4d86bb;">Acesso Livre</div>
<div class="t" style="left:500.00px;top:690.75px;font:normal 8.3px/8.3px 'Liberation Sans',sans-serif;color:#626262;">DF</div>
<div class="t" style="left:564.00px;top:690.75px;font:normal 8.3px/8.3px 'Liberation Sans',sans-serif;color:#626262;">BRASÍLIA</div>
<div class="t" style="left:725.00px;top:691.31px;font:normal 8.65px/8.65px 'Liberation Mono',monospace;color:#626262;">30719787000107</div>
<div class="t" style="left:806.00px;top:690.75px;font:normal 8.3px/8.3px 'Liberation Sans',sans-serif;color:#626262;">INSTITUTO RECICLANDO O FUTURO -</div>
<div class="t" style="left:806.00px;top:701.35px;font:normal 8.3px/8.3px 'Liberation Sans',sans-serif;color:#626262;">RECICLANDO O FUTURO</div>
<div class="t" style="left:996.00px;top:690.75px;font:normal 8.3px/8.3px 'Liberation Sans',sans-serif;color:#626262;letter-spacing:-0.2px;">TERMO DE FOMENTO</div>
<div class="t" style="left:1153.00px;top:690.75px;font:normal 8.3px/8.3px 'Liberation Sans',sans-serif;color:#626262;">SIM</div>
<div class="t" style="left:1217.00px;top:690.75px;font:normal 8.3px/8.3px 'Liberation Sans',sans-serif;color:#626262;letter-spacing:0.08px;">Qualificação técnica e profissional para</div>
<div class="t" style="left:1217.00px;top:701.35px;font:normal 8.3px/8.3px 'Liberation Sans',sans-serif;color:#626262;letter-spacing:0.08px;">mulheres, através de Oficina Designer de</div>
<div class="t" style="left:1217.00px;top:711.95px;font:normal 8.3px/8.3px 'Liberation Sans',sans-serif;color:#626262;letter-spacing:0.08px;">Sobrancelha, Massagem, Depilação e</div>
<div class="t" style="left:1407.00px;top:690.75px;font:normal 8.3px/8.3px 'Liberation Sans',sans-serif;color:#626262;">Em execução</div>
<div class="t" style="left:-182.50px;width:600px;text-align:right;top:728.51px;font:normal 8.65px/8.65px 'Liberation Mono',monospace;color:#626262;">977830</div>
<div class="t" style="left:427.00px;top:727.95px;font:normal 8.3px/8.3px 'Liberation Sans',sans-serif;color:#4d86bb;">Acesso Livre</div>
<div class="t" style="left:500.00px;top:727.95px;font:normal 8.3px/8.3px 'Liberation Sans',sans-serif;color:#626262;">DF</div>
<div class="t" style="left:564.00px;top:727.95px;font:normal 8.3px/8.3px 'Liberation Sans',sans-serif;color:#626262;">BRASÍLIA</div>
<div class="t" style="left:725.00px;top:728.51px;font:normal 8.65px/8.65px 'Liberation Mono',monospace;color:#626262;">30719787000107</div>
<div class="t" style="left:806.00px;top:727.95px;font:normal 8.3px/8.3px 'Liberation Sans',sans-serif;color:#626262;">INSTITUTO RECICLANDO O FUTURO -</div>
<div class="t" style="left:806.00px;top:738.55px;font:normal 8.3px/8.3px 'Liberation Sans',sans-serif;color:#626262;">RECICLANDO O FUTURO</div>
<div class="t" style="left:996.00px;top:727.95px;font:normal 8.3px/8.3px 'Liberation Sans',sans-serif;color:#626262;letter-spacing:-0.2px;">TERMO DE FOMENTO</div>
<div class="t" style="left:1153.00px;top:727.95px;font:normal 8.3px/8.3px 'Liberation Sans',sans-serif;color:#626262;">SIM</div>
<div class="t" style="left:1217.00px;top:727.95px;font:normal 8.3px/8.3px 'Liberation Sans',sans-serif;color:#626262;letter-spacing:0.08px;">Implementação e Desenvolvimento do Projeto:</div>
<div class="t" style="left:1217.00px;top:738.55px;font:normal 8.3px/8.3px 'Liberation Sans',sans-serif;color:#626262;letter-spacing:0.08px;">Esporte Renovando Vidas no Distrito Federal</div>
<div class="t" style="left:1407.00px;top:727.95px;font:normal 8.3px/8.3px 'Liberation Sans',sans-serif;color:#626262;">Em execução</div>
<div class="t" style="left:-182.50px;width:600px;text-align:right;top:754.71px;font:normal 8.65px/8.65px 'Liberation Mono',monospace;color:#626262;">977061</div>
<div class="t" style="left:427.00px;top:754.15px;font:normal 8.3px/8.3px 'Liberation Sans',sans-serif;color:#4d86bb;">Acesso Livre</div>
<div class="t" style="left:500.00px;top:754.15px;font:normal 8.3px/8.3px 'Liberation Sans',sans-serif;color:#626262;">DF</div>
<div class="t" style="left:564.00px;top:754.15px;font:normal 8.3px/8.3px 'Liberation Sans',sans-serif;color:#626262;">BRASÍLIA</div>
<div class="t" style="left:725.00px;top:754.71px;font:normal 8.65px/8.65px 'Liberation Mono',monospace;color:#626262;">30719787000107</div>
<div class="t" style="left:806.00px;top:754.15px;font:normal 8.3px/8.3px 'Liberation Sans',sans-serif;color:#626262;">INSTITUTO RECICLANDO O FUTURO -</div>
<div class="t" style="left:806.00px;top:764.75px;font:normal 8.3px/8.3px 'Liberation Sans',sans-serif;color:#626262;">RECICLANDO O FUTURO</div>
<div class="t" style="left:996.00px;top:754.15px;font:normal 8.3px/8.3px 'Liberation Sans',sans-serif;color:#626262;letter-spacing:-0.2px;">TERMO DE FOMENTO</div>
<div class="t" style="left:1153.00px;top:754.15px;font:normal 8.3px/8.3px 'Liberation Sans',sans-serif;color:#626262;">SIM</div>
<div class="t" style="left:1217.00px;top:754.15px;font:normal 8.3px/8.3px 'Liberation Sans',sans-serif;color:#626262;letter-spacing:0.08px;">Implementa��o e Desenvolvimento do</div>
<div class="t" style="left:1217.00px;top:764.75px;font:normal 8.3px/8.3px 'Liberation Sans',sans-serif;color:#626262;letter-spacing:0.08px;">Projeto: O Esporte Renovando Vidas, no Estado</div>
<div class="t" style="left:1217.00px;top:775.35px;font:normal 8.3px/8.3px 'Liberation Sans',sans-serif;color:#626262;letter-spacing:0.08px;">de Goi�</div>
<div class="t" style="left:1407.00px;top:754.15px;font:normal 8.3px/8.3px 'Liberation Sans',sans-serif;color:#626262;">Em execução</div>
<div class="t" style="left:-182.50px;width:600px;text-align:right;top:791.31px;font:normal 8.65px/8.65px 'Liberation Mono',monospace;color:#626262;">977682</div>
<div class="t" style="left:427.00px;top:790.75px;font:normal 8.3px/8.3px 'Liberation Sans',sans-serif;color:#4d86bb;">Acesso Livre</div>
<div class="t" style="left:500.00px;top:790.75px;font:normal 8.3px/8.3px 'Liberation Sans',sans-serif;color:#626262;">DF</div>
<div class="t" style="left:564.00px;top:790.75px;font:normal 8.3px/8.3px 'Liberation Sans',sans-serif;color:#626262;">BRASÍLIA</div>
<div class="t" style="left:725.00px;top:791.31px;font:normal 8.65px/8.65px 'Liberation Mono',monospace;color:#626262;">30719787000107</div>
<div class="t" style="left:806.00px;top:790.75px;font:normal 8.3px/8.3px 'Liberation Sans',sans-serif;color:#626262;">INSTITUTO RECICLANDO O FUTURO -</div>
<div class="t" style="left:806.00px;top:801.35px;font:normal 8.3px/8.3px 'Liberation Sans',sans-serif;color:#626262;">RECICLANDO O FUTURO</div>
<div class="t" style="left:996.00px;top:790.75px;font:normal 8.3px/8.3px 'Liberation Sans',sans-serif;color:#626262;letter-spacing:-0.2px;">TERMO DE FOMENTO</div>
<div class="t" style="left:1153.00px;top:790.75px;font:normal 8.3px/8.3px 'Liberation Sans',sans-serif;color:#626262;">SIM</div>
<div class="t" style="left:1217.00px;top:790.75px;font:normal 8.3px/8.3px 'Liberation Sans',sans-serif;color:#626262;letter-spacing:0.08px;">Implementação e Desenvolvimento do Projeto</div>
<div class="t" style="left:1217.00px;top:801.35px;font:normal 8.3px/8.3px 'Liberation Sans',sans-serif;color:#626262;letter-spacing:0.08px;">Reciclando Sonhos no Estado de Goiás/GO</div>
<div class="t" style="left:1407.00px;top:790.75px;font:normal 8.3px/8.3px 'Liberation Sans',sans-serif;color:#626262;">Em execução</div>
<div class="t" style="left:-182.50px;width:600px;text-align:right;top:817.71px;font:normal 8.65px/8.65px 'Liberation Mono',monospace;color:#626262;">977784</div>
<div class="t" style="left:427.00px;top:817.15px;font:normal 8.3px/8.3px 'Liberation Sans',sans-serif;color:#4d86bb;">Acesso Livre</div>
<div class="t" style="left:500.00px;top:817.15px;font:normal 8.3px/8.3px 'Liberation Sans',sans-serif;color:#626262;">DF</div>
<div class="t" style="left:564.00px;top:817.15px;font:normal 8.3px/8.3px 'Liberation Sans',sans-serif;color:#626262;">BRASÍLIA</div>
<div class="t" style="left:725.00px;top:817.71px;font:normal 8.65px/8.65px 'Liberation Mono',monospace;color:#626262;">30719787000107</div>
<div class="t" style="left:806.00px;top:817.15px;font:normal 8.3px/8.3px 'Liberation Sans',sans-serif;color:#626262;">INSTITUTO RECICLANDO O FUTURO -</div>
<div class="t" style="left:806.00px;top:827.75px;font:normal 8.3px/8.3px 'Liberation Sans',sans-serif;color:#626262;">RECICLANDO O FUTURO</div>
<div class="t" style="left:996.00px;top:817.15px;font:normal 8.3px/8.3px 'Liberation Sans',sans-serif;color:#626262;letter-spacing:-0.2px;">TERMO DE FOMENTO</div>
<div class="t" style="left:1153.00px;top:817.15px;font:normal 8.3px/8.3px 'Liberation Sans',sans-serif;color:#626262;">SIM</div>
<div class="t" style="left:1217.00px;top:817.15px;font:normal 8.3px/8.3px 'Liberation Sans',sans-serif;color:#626262;letter-spacing:0.08px;">Implementação e Desenvolvimento do Projeto</div>
<div class="t" style="left:1217.00px;top:827.75px;font:normal 8.3px/8.3px 'Liberation Sans',sans-serif;color:#626262;letter-spacing:0.08px;">Vida Ativa, Futuro Saudável, no Distrito Federal</div>
<div class="t" style="left:1407.00px;top:817.15px;font:normal 8.3px/8.3px 'Liberation Sans',sans-serif;color:#626262;">Em execução</div>
<div class="t" style="left:-182.50px;width:600px;text-align:right;top:843.31px;font:normal 8.65px/8.65px 'Liberation Mono',monospace;color:#626262;">982589</div>
<div class="t" style="left:427.00px;top:842.75px;font:normal 8.3px/8.3px 'Liberation Sans',sans-serif;color:#4d86bb;">Acesso Livre</div>
<div class="t" style="left:500.00px;top:842.75px;font:normal 8.3px/8.3px 'Liberation Sans',sans-serif;color:#626262;">DF</div>
<div class="t" style="left:564.00px;top:842.75px;font:normal 8.3px/8.3px 'Liberation Sans',sans-serif;color:#626262;">BRASÍLIA</div>
<div class="t" style="left:725.00px;top:843.31px;font:normal 8.65px/8.65px 'Liberation Mono',monospace;color:#626262;">30719787000107</div>
<div class="t" style="left:806.00px;top:842.75px;font:normal 8.3px/8.3px 'Liberation Sans',sans-serif;color:#626262;">INSTITUTO RECICLANDO O FUTURO -</div>
<div class="t" style="left:806.00px;top:853.35px;font:normal 8.3px/8.3px 'Liberation Sans',sans-serif;color:#626262;">RECICLANDO O FUTURO</div>
<div class="t" style="left:996.00px;top:842.75px;font:normal 8.3px/8.3px 'Liberation Sans',sans-serif;color:#626262;letter-spacing:-0.2px;">TERMO DE FOMENTO</div>
<div class="t" style="left:1153.00px;top:842.75px;font:normal 8.3px/8.3px 'Liberation Sans',sans-serif;color:#626262;">SIM</div>
<div class="t" style="left:1217.00px;top:842.75px;font:normal 8.3px/8.3px 'Liberation Sans',sans-serif;color:#626262;letter-spacing:0.08px;">Implementação e Desenvolvimento do Projeto</div>
<div class="t" style="left:1217.00px;top:853.35px;font:normal 8.3px/8.3px 'Liberation Sans',sans-serif;color:#626262;letter-spacing:0.08px;">Skate em Ação em Brasília - DF</div>
<div class="t" style="left:1407.00px;top:842.75px;font:normal 8.3px/8.3px 'Liberation Sans',sans-serif;color:#626262;">Em execução</div>
<div class="t" style="left:-182.50px;width:600px;text-align:right;top:870.31px;font:normal 8.65px/8.65px 'Liberation Mono',monospace;color:#626262;">982496</div>
<div class="t" style="left:427.00px;top:869.75px;font:normal 8.3px/8.3px 'Liberation Sans',sans-serif;color:#4d86bb;">Acesso Livre</div>
<div class="t" style="left:500.00px;top:869.75px;font:normal 8.3px/8.3px 'Liberation Sans',sans-serif;color:#626262;">DF</div>
<div class="t" style="left:564.00px;top:869.75px;font:normal 8.3px/8.3px 'Liberation Sans',sans-serif;color:#626262;">BRASÍLIA</div>
<div class="t" style="left:725.00px;top:870.31px;font:normal 8.65px/8.65px 'Liberation Mono',monospace;color:#626262;">30719787000107</div>
<div class="t" style="left:806.00px;top:869.75px;font:normal 8.3px/8.3px 'Liberation Sans',sans-serif;color:#626262;">INSTITUTO RECICLANDO O FUTURO -</div>
<div class="t" style="left:806.00px;top:880.35px;font:normal 8.3px/8.3px 'Liberation Sans',sans-serif;color:#626262;">RECICLANDO O FUTURO</div>
<div class="t" style="left:996.00px;top:869.75px;font:normal 8.3px/8.3px 'Liberation Sans',sans-serif;color:#626262;letter-spacing:-0.2px;">TERMO DE FOMENTO</div>
<div class="t" style="left:1153.00px;top:869.75px;font:normal 8.3px/8.3px 'Liberation Sans',sans-serif;color:#626262;">SIM</div>
<div class="t" style="left:1217.00px;top:869.75px;font:normal 8.3px/8.3px 'Liberation Sans',sans-serif;color:#626262;letter-spacing:0.08px;">Implementação e Desenvolvimento do Projeto</div>
<div class="t" style="left:1217.00px;top:880.35px;font:normal 8.3px/8.3px 'Liberation Sans',sans-serif;color:#626262;letter-spacing:0.08px;">Craques do Amanhã: Reciclando o Futuro em</div>
<div class="t" style="left:1217.00px;top:890.95px;font:normal 8.3px/8.3px 'Liberation Sans',sans-serif;color:#626262;letter-spacing:0.08px;">Brasília - DF</div>
<div class="t" style="left:1407.00px;top:869.75px;font:normal 8.3px/8.3px 'Liberation Sans',sans-serif;color:#626262;">Em execução</div>
<div class="t" style="left:-182.50px;width:600px;text-align:right;top:906.91px;font:normal 8.65px/8.65px 'Liberation Mono',monospace;color:#626262;">982495</div>
<div class="t" style="left:427.00px;top:906.35px;font:normal 8.3px/8.3px 'Liberation Sans',sans-serif;color:#4d86bb;">Acesso Livre</div>
<div class="t" style="left:500.00px;top:906.35px;font:normal 8.3px/8.3px 'Liberation Sans',sans-serif;color:#626262;">DF</div>
<div class="t" style="left:564.00px;top:906.35px;font:normal 8.3px/8.3px 'Liberation Sans',sans-serif;color:#626262;">BRASÍLIA</div>
<div class="t" style="left:725.00px;top:906.91px;font:normal 8.65px/8.65px 'Liberation Mono',monospace;color:#626262;">30719787000107</div>
<div class="t" style="left:806.00px;top:906.35px;font:normal 8.3px/8.3px 'Liberation Sans',sans-serif;color:#626262;">INSTITUTO RECICLANDO O FUTURO -</div>
<div class="t" style="left:806.00px;top:916.95px;font:normal 8.3px/8.3px 'Liberation Sans',sans-serif;color:#626262;">RECICLANDO O FUTURO</div>
<div class="t" style="left:996.00px;top:906.35px;font:normal 8.3px/8.3px 'Liberation Sans',sans-serif;color:#626262;letter-spacing:-0.2px;">TERMO DE FOMENTO</div>
<div class="t" style="left:1153.00px;top:906.35px;font:normal 8.3px/8.3px 'Liberation Sans',sans-serif;color:#626262;">SIM</div>
<div class="t" style="left:1217.00px;top:906.35px;font:normal 8.3px/8.3px 'Liberation Sans',sans-serif;color:#626262;letter-spacing:0.08px;">Implementação e Desenvolvimento do Projeto</div>
<div class="t" style="left:1217.00px;top:916.95px;font:normal 8.3px/8.3px 'Liberation Sans',sans-serif;color:#626262;letter-spacing:0.08px;">Judô e Futsal: Dois Caminhos, um Futuro, no</div>
<div class="t" style="left:1217.00px;top:927.55px;font:normal 8.3px/8.3px 'Liberation Sans',sans-serif;color:#626262;letter-spacing:0.08px;">RIACHO FUNDO II - DF</div>
<div class="t" style="left:1407.00px;top:906.35px;font:normal 8.3px/8.3px 'Liberation Sans',sans-serif;color:#626262;">Em execução</div>
<div class="t" style="left:-182.50px;width:600px;text-align:right;top:943.91px;font:normal 8.65px/8.65px 'Liberation Mono',monospace;color:#626262;">991228</div>
<div class="t" style="left:427.00px;top:943.35px;font:normal 8.3px/8.3px 'Liberation Sans',sans-serif;color:#4d86bb;">Acesso Livre</div>
<div class="t" style="left:500.00px;top:943.35px;font:normal 8.3px/8.3px 'Liberation Sans',sans-serif;color:#626262;">DF</div>
<div class="t" style="left:564.00px;top:943.35px;font:normal 8.3px/8.3px 'Liberation Sans',sans-serif;color:#626262;">BRASÍLIA</div>
<div class="t" style="left:725.00px;top:943.91px;font:normal 8.65px/8.65px 'Liberation Mono',monospace;color:#626262;">30719787000107</div>
<div class="t" style="left:806.00px;top:943.35px;font:normal 8.3px/8.3px 'Liberation Sans',sans-serif;color:#626262;">INSTITUTO RECICLANDO O FUTURO -</div>
<div class="t" style="left:996.00px;top:943.35px;font:normal 8.3px/8.3px 'Liberation Sans',sans-serif;color:#626262;letter-spacing:-0.2px;">TERMO DE FOMENTO</div>
<div class="t" style="left:1153.00px;top:943.35px;font:normal 8.3px/8.3px 'Liberation Sans',sans-serif;color:#626262;">SIM</div>
<div class="t" style="left:1217.00px;top:943.35px;font:normal 8.3px/8.3px 'Liberation Sans',sans-serif;color:#626262;letter-spacing:0.08px;">Implementação e Desenvolvimento do Projeto</div>
<div class="t" style="left:1407.00px;top:943.35px;font:normal 8.3px/8.3px 'Liberation Sans',sans-serif;color:#626262;">Em execução</div>
<div class="r" style="left:330.00px;top:953.00px;width:1164.00px;height:15.00px;background:#fff;"></div>
<div class="r" style="left:423.40px;top:953.00px;width:1.00px;height:15.00px;background:#e6e6e6;"></div>
<div class="r" style="left:496.30px;top:953.00px;width:1.00px;height:15.00px;background:#e6e6e6;"></div>
<div class="r" style="left:560.20px;top:953.00px;width:1.00px;height:15.00px;background:#e6e6e6;"></div>
<div class="r" style="left:720.30px;top:953.00px;width:1.00px;height:15.00px;background:#e6e6e6;"></div>
<div class="r" style="left:802.50px;top:953.00px;width:1.00px;height:15.00px;background:#e6e6e6;"></div>
<div class="r" style="left:992.50px;top:953.00px;width:1.00px;height:15.00px;background:#e6e6e6;"></div>
<div class="r" style="left:1149.70px;top:953.00px;width:1.00px;height:15.00px;background:#e6e6e6;"></div>
<div class="r" style="left:1213.50px;top:953.00px;width:1.00px;height:15.00px;background:#e6e6e6;"></div>
<div class="r" style="left:1403.40px;top:953.00px;width:1.00px;height:15.00px;background:#e6e6e6;"></div>
<div class="t" style="left:333.00px;top:954.95px;font:bold 8.3px/8.3px 'Liberation Sans',sans-serif;color:#505050;">Totais</div>
</body></html>
